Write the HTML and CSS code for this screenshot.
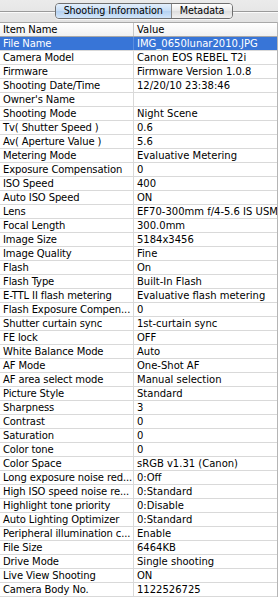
FILE: index.html
```html
<!DOCTYPE html>
<html lang="en">
<head>
    <meta charset="UTF-8">
    <title>Shooting Information</title>
    <link rel="stylesheet" href="styles.css">
</head>
<body>

<div class="toolbar">
    <div class="tabs">
        <span class="tab active">Shooting Information</span>
        <span class="tab">Metadata</span>
    </div>
</div>

<div class="table">
    <div class="row head"><span>Item Name</span><span>Value</span></div>
    <div class="row selected"><span>File Name</span><span>IMG_0650lunar2010.JPG</span></div>
    <div class="row"><span>Camera Model</span><span>Canon EOS REBEL T2i</span></div>
    <div class="row"><span>Firmware</span><span>Firmware Version 1.0.8</span></div>
    <div class="row"><span>Shooting Date/Time</span><span>12/20/10 23:38:46</span></div>
    <div class="row"><span>Owner's Name</span><span></span></div>
    <div class="row"><span>Shooting Mode</span><span>Night Scene</span></div>
    <div class="row"><span>Tv( Shutter Speed )</span><span>0.6</span></div>
    <div class="row"><span>Av( Aperture Value )</span><span>5.6</span></div>
    <div class="row"><span>Metering Mode</span><span>Evaluative Metering</span></div>
    <div class="row"><span>Exposure Compensation</span><span>0</span></div>
    <div class="row"><span>ISO Speed</span><span>400</span></div>
    <div class="row"><span>Auto ISO Speed</span><span>ON</span></div>
    <div class="row"><span>Lens</span><span>EF70-300mm f/4-5.6 IS USM</span></div>
    <div class="row"><span>Focal Length</span><span>300.0mm</span></div>
    <div class="row"><span>Image Size</span><span>5184x3456</span></div>
    <div class="row"><span>Image Quality</span><span>Fine</span></div>
    <div class="row"><span>Flash</span><span>On</span></div>
    <div class="row"><span>Flash Type</span><span>Built-In Flash</span></div>
    <div class="row"><span>E-TTL II flash metering</span><span>Evaluative flash metering</span></div>
    <div class="row"><span>Flash Exposure Compen...</span><span>0</span></div>
    <div class="row"><span>Shutter curtain sync</span><span>1st-curtain sync</span></div>
    <div class="row"><span>FE lock</span><span>OFF</span></div>
    <div class="row"><span>White Balance Mode</span><span>Auto</span></div>
    <div class="row"><span>AF Mode</span><span>One-Shot AF</span></div>
    <div class="row"><span>AF area select mode</span><span>Manual selection</span></div>
    <div class="row"><span>Picture Style</span><span>Standard</span></div>
    <div class="row"><span>Sharpness</span><span>3</span></div>
    <div class="row"><span>Contrast</span><span>0</span></div>
    <div class="row"><span>Saturation</span><span>0</span></div>
    <div class="row"><span>Color tone</span><span>0</span></div>
    <div class="row"><span>Color Space</span><span>sRGB v1.31 (Canon)</span></div>
    <div class="row"><span>Long exposure noise red...</span><span>0:Off</span></div>
    <div class="row"><span>High ISO speed noise re...</span><span>0:Standard</span></div>
    <div class="row"><span>Highlight tone priority</span><span>0:Disable</span></div>
    <div class="row"><span>Auto Lighting Optimizer</span><span>0:Standard</span></div>
    <div class="row"><span>Peripheral illumination c...</span><span>Enable</span></div>
    <div class="row"><span>File Size</span><span>6464KB</span></div>
    <div class="row"><span>Drive Mode</span><span>Single shooting</span></div>
    <div class="row"><span>Live View Shooting</span><span>ON</span></div>
    <div class="row"><span>Camera Body No.</span><span>1122526725</span></div>
</div>

</body>
</html>
```

FILE: styles.css
```css
/* General */
* {
    margin: 0;
    padding: 0;
    box-sizing: border-box;
}

body {
    font-family: "DejaVu Sans", Verdana, sans-serif;
    font-size: 10px;
    color: #000;
    background-color: #fff;
    width: 278px;
    overflow: hidden;
}

/* Top bar with the segmented control */
.toolbar {
    height: 22px;
    display: flex;
    justify-content: center;
    align-items: center;
    padding-left: 10px;
    background-image:
        linear-gradient(#9a9a9a, #9a9a9a),
        linear-gradient(#fafafa, #fafafa),
        linear-gradient(#ebebeb, #e2e2e2);
    background-size: 100% 1px, 100% 1px, 100% 100%;
    background-position: 0 11px, 0 12px, 0 0;
    background-repeat: no-repeat;
}

.tabs {
    display: flex;
    height: 16px;
    border: 1px solid #6f6f6f;
    border-radius: 4px;
    overflow: hidden;
    box-shadow: 0 1px 0 rgba(255, 255, 255, 0.7);
}

.tab {
    font-size: 9.6px;
    letter-spacing: -0.1px;
    line-height: 14px;
    padding: 0 8px;
    background: linear-gradient(#ffffff, #e9e9e9 50%, #dddddd 51%, #f2f2f2);
}

.tab.active {
    background: linear-gradient(#e3effc, #c5dcf5 50%, #b3d0f1 51%, #d3e6fa);
    border-right: 1px solid #8a8a8a;
}

/* Table */
.table {
    border-right: 1px solid #b5b5b5;
}

.row {
    display: grid;
    grid-template-columns: 133px 1fr;
    height: 14px;
    line-height: 13px;
    border-bottom: 1px solid #d9d9d9;
    white-space: nowrap;
}

.row span {
    padding-left: 3px;
    overflow: hidden;
}

.row span:first-child {
    letter-spacing: -0.12px;
}

.row span + span {
    border-left: 1px solid #d9d9d9;
}

.row.head {
    height: 15px;
    background: linear-gradient(#ffffff, #f1f1f1);
    border-top: 1px solid #a8a8a8;
    border-bottom: 1px solid #a8a8a8;
}

.row.head span + span {
    border-left-color: #c8c8c8;
}

.row.selected {
    background-color: #3875d7;
    color: #fff;
}

.row.selected span + span {
    border-left-color: #5a8fe0;
}
```
